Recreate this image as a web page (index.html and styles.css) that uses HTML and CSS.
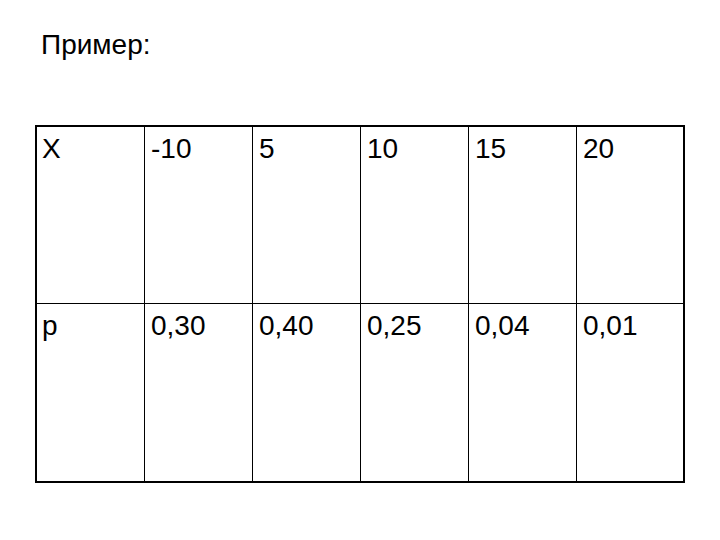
FILE: index.html
```html
<!DOCTYPE html>
<html lang="ru">
<head>
<meta charset="utf-8">
<title>Пример</title>
<link rel="stylesheet" href="styles.css">
</head>
<body>
<div class="page">
  <h1 class="title">Пример:</h1>
  <div class="grid">
    <div class="cell">X</div>
    <div class="cell">-10</div>
    <div class="cell">5</div>
    <div class="cell">10</div>
    <div class="cell">15</div>
    <div class="cell">20</div>
    <div class="cell row2">p</div>
    <div class="cell row2">0,30</div>
    <div class="cell row2">0,40</div>
    <div class="cell row2">0,25</div>
    <div class="cell row2">0,04</div>
    <div class="cell row2">0,01</div>
  </div>
</div>
</body>
</html>
```
FILE: styles.css
```css
html, body {
  margin: 0;
  padding: 0;
  background: #ffffff;
}

.page {
  width: 720px;
  height: 540px;
  box-sizing: border-box;
  padding: 29px 0 0 35px;
  font-family: "Liberation Sans", Arial, sans-serif;
  color: #000000;
}

.title {
  margin: 0 0 0 6px;
  font-size: 28px;
  font-weight: normal;
  line-height: 1.15;
  height: 96px;
}

.grid {
  width: 650px;
  height: 358px;
  box-sizing: border-box;
  border: 2px solid #000000;
  display: grid;
  grid-template-columns: 107px 108px 108px 108px 108px 107px;
  grid-template-rows: 176px 178px;
}

.cell {
  box-sizing: border-box;
  border-left: 1px solid #000000;
  padding: 6px 0 0 6px;
  font-size: 28px;
  line-height: 1.15;
}

.cell:nth-child(6n+1) {
  border-left: none;
  padding-left: 5px;
}

.row2 {
  border-top: 1px solid #000000;
}
```
